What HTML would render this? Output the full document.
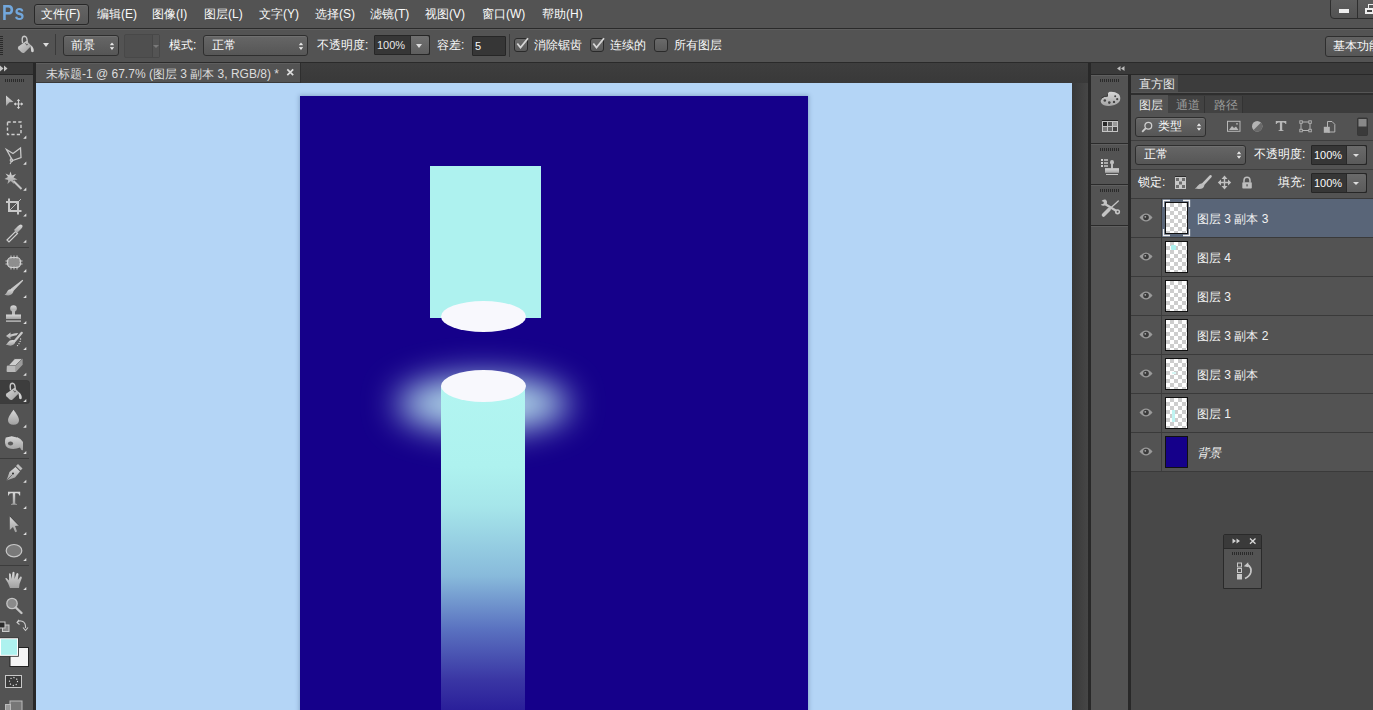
<!DOCTYPE html>
<html><head><meta charset="utf-8">
<style>
*{box-sizing:border-box;margin:0;padding:0}
html,body{width:1373px;height:710px;overflow:hidden;background:#535353;font-family:"Liberation Sans",sans-serif;font-size:12px;color:#fafafa}
.a{position:absolute}
.t{position:absolute;white-space:nowrap;line-height:14px}
.dd{position:absolute;border:1px solid #2e2e2e;border-radius:3px;background:linear-gradient(#666,#565656);box-shadow:inset 0 1px 0 #707070}
.inp{position:absolute;border:1px solid #262626;background:#363636;border-radius:1px}
.btn{position:absolute;background:linear-gradient(#6a6a6a,#5a5a5a);border-left:1px solid #2a2a2a}
.cb{position:absolute;width:14px;height:14px;border:1.5px solid #2a2a2a;border-radius:3px;background:linear-gradient(#6a6a6a,#5a5a5a)}
.updown{position:absolute;width:7px;height:10px}
</style></head><body>

<!-- MENU BAR -->
<div class="a" style="left:0;top:0;width:1373px;height:28px;background:#535353"></div>
<div class="a" style="left:0;top:28px;width:1373px;height:1px;background:#2a2a2a"></div><div class="a" style="left:0;top:29px;width:1373px;height:1px;background:#5e5e5e"></div>
<div class="t" style="left:2px;top:2px;font-size:22px;line-height:22px;font-weight:bold;color:#72a7dc;letter-spacing:1.0px;transform:scaleX(0.8);transform-origin:0 0">Ps</div>
<div class="a" style="left:34px;top:4px;width:55px;height:21px;border:1px solid #282828;border-radius:3px;background:linear-gradient(#646464,#585858);box-shadow:inset 0 1px 0 #6c6c6c,0 1px 0 #5e5e5e"></div>
<div class="t" style="left:41px;top:7px">文件(F)</div>
<div class="t" style="left:97px;top:7px">编辑(E)</div>
<div class="t" style="left:152px;top:7px">图像(I)</div>
<div class="t" style="left:204px;top:7px">图层(L)</div>
<div class="t" style="left:259px;top:7px">文字(Y)</div>
<div class="t" style="left:315px;top:7px">选择(S)</div>
<div class="t" style="left:370px;top:7px">滤镜(T)</div>
<div class="t" style="left:425px;top:7px">视图(V)</div>
<div class="t" style="left:482px;top:7px">窗口(W)</div>
<div class="t" style="left:542px;top:7px">帮助(H)</div>
<!-- window buttons -->
<div class="a" style="left:1330px;top:-3px;width:60px;height:22px;border:1px solid #2e2e2e;border-radius:4px;background:linear-gradient(#5e5e5e,#535353)"></div>
<div class="a" style="left:1357px;top:0;width:1px;height:18px;background:#2e2e2e"></div>
<div class="a" style="left:1339px;top:9px;width:10px;height:4px;background:#eee"></div>
<div class="a" style="left:1368px;top:4px;width:6px;height:5px;border:1.5px solid #eee"></div><div class="a" style="left:1365px;top:8px;width:9px;height:6px;border:2px solid #eee;background:#444"></div>

<!-- OPTIONS BAR -->
<!-- grip -->
<div class="a" style="left:0;top:36px;width:3px;height:19px;background:repeating-linear-gradient(#2a2a2a 0 1px,transparent 1px 2px)"></div>
<!-- bucket icon -->
<svg class="a" style="left:16px;top:34px" width="20" height="20" viewBox="16 34 20 20">
<defs><linearGradient id="bk" x1="0" y1="0" x2="1" y2="1"><stop offset="0" stop-color="#dadada"/><stop offset="1" stop-color="#9a9a9a"/></linearGradient></defs>
<path d="M22.6 43.2 Q21.2 36.3 24.4 36.2 Q27.2 36.2 27.3 42.3" fill="none" stroke="#c8c8c8" stroke-width="1.4"/>
<path d="M26.5 40.8 L31.4 45.7 L24.6 52.4 Q23 53.6 21.4 52.3 L18.4 49.3 Q17.2 47.8 18.5 46.4 Z" fill="url(#bk)"/>
<path d="M25.5 43.2 L26.8 45.2 L27.8 43.8" fill="none" stroke="#555" stroke-width="0.9"/>
<path d="M30.6 45 Q33 46.5 33.6 49 Q34.3 52.2 32.4 52.2 Q30.6 52.2 31 49.6 L30.6 47.2Z" fill="#d2d2d2"/>
</svg>
<div class="a" style="left:43px;top:43px;width:0;height:0;border-left:3.5px solid transparent;border-right:3.5px solid transparent;border-top:4px solid #ddd"></div>
<div class="a" style="left:55px;top:34px;width:1px;height:21px;background:#3a3a3a"></div>
<!-- 前景 dropdown -->
<div class="dd" style="left:63px;top:35px;width:56px;height:21px"></div>
<div class="t" style="left:71px;top:38px">前景</div>
<svg class="a" style="left:108.5px;top:40.5px" width="6" height="10"><path d="M0.2 4.6 L3 1 L5.8 4.6Z M0.2 5.8 L3 9.4 L5.8 5.8Z" fill="#e8e8e8" stroke="#2a2a2a" stroke-width="0.4"/></svg>
<!-- swatch dropdown -->
<div class="a" style="left:124px;top:34px;width:36px;height:24px;border:1px solid #484848;border-radius:2px;background:#4f4f4f"></div>
<div class="a" style="left:152px;top:35px;width:7px;height:22px;border-left:1px solid #474747;background:#545454"></div>
<div class="a" style="left:153px;top:45px;width:0;height:0;border-left:3px solid transparent;border-right:3px solid transparent;border-top:3px solid #7a7a7a"></div>
<div class="t" style="left:169px;top:38px">模式:</div>
<!-- 正常 dropdown -->
<div class="dd" style="left:203px;top:35px;width:105px;height:21px"></div>
<div class="t" style="left:212px;top:38px">正常</div>
<svg class="a" style="left:297.5px;top:40.5px" width="6" height="10"><path d="M0.2 4.6 L3 1 L5.8 4.6Z M0.2 5.8 L3 9.4 L5.8 5.8Z" fill="#e8e8e8" stroke="#2a2a2a" stroke-width="0.4"/></svg>
<div class="t" style="left:317px;top:38px">不透明度:</div>
<div class="inp" style="left:374px;top:35px;width:56px;height:20px"></div>
<div class="btn" style="left:410px;top:36px;width:19px;height:18px;border-radius:0 2px 2px 0;background:linear-gradient(#707070,#5e5e5e)"></div>
<div class="a" style="left:416px;top:44px;width:0;height:0;border-left:3.5px solid transparent;border-right:3.5px solid transparent;border-top:4px solid #ddd"></div>
<div class="t" style="left:377px;top:38px;font-size:11px;color:#e8e8e8">100%</div>
<div class="t" style="left:437px;top:38px">容差:</div>
<div class="inp" style="left:472px;top:36px;width:34px;height:20px"></div>
<div class="t" style="left:475px;top:39px;font-size:11px">5</div>
<div class="a" style="left:509px;top:34px;width:1px;height:23px;background:#3a3a3a"></div>
<div class="cb" style="left:514px;top:38px"></div>
<svg class="a" style="left:515px;top:36px" width="15" height="15"><path d="M2.3 7.5 L5.5 11.5 L13 2.3" fill="none" stroke="#d6d6d6" stroke-width="1.8"/></svg>
<div class="t" style="left:534px;top:38px">消除锯齿</div>
<div class="cb" style="left:590px;top:38px"></div>
<svg class="a" style="left:591px;top:36px" width="15" height="15"><path d="M2.3 7.5 L5.5 11.5 L13 2.3" fill="none" stroke="#d6d6d6" stroke-width="1.8"/></svg>
<div class="t" style="left:610px;top:38px">连续的</div>
<div class="cb" style="left:654px;top:38px"></div>
<div class="t" style="left:674px;top:38px">所有图层</div>
<!-- 基本功能 -->
<div class="a" style="left:1325px;top:36px;width:60px;height:21px;border:1px solid #2e2e2e;border-radius:3px;background:linear-gradient(#626262,#565656)"></div>
<div class="t" style="left:1333px;top:39px">基本功能</div>
<div class="a" style="left:0;top:62px;width:1373px;height:1px;background:#2a2a2a"></div>

<!-- TAB BAR + CANVAS -->
<div class="a" style="left:36px;top:63px;width:1052px;height:20px;background:linear-gradient(#3e3e3e,#393939)"></div>
<div class="a" style="left:36px;top:63px;width:264px;height:19px;background:#535353;border-top:1px solid #5e5e5e"></div><div class="a" style="left:300px;top:63px;width:1px;height:20px;background:#2e2e2e"></div>
<div class="t" style="left:46px;top:67px;color:#dcdcdc">未标题-1 @ 67.7% (图层 3 副本 3, RGB/8) *</div>
<svg class="a" style="left:284px;top:66px" width="12" height="12" viewBox="284 66 12 12"><path d="M287.3 69.3 L293.2 75.2 M293.2 69.3 L287.3 75.2" stroke="#dcdcdc" stroke-width="1.7"/></svg>
<div class="a" style="left:36px;top:83px;width:1036px;height:627px;background:#b4d5f6;overflow:hidden">
<div class="a" style="left:264px;top:13px;width:508px;height:700px;background:#15008a;box-shadow:0 0 4px 1px rgba(60,90,130,0.35);overflow:hidden">
 <div class="a" style="left:129.6px;top:70px;width:111px;height:152px;background:#aef2ef;filter:blur(0.45px)"></div>
 <div class="a" style="left:141px;top:205px;width:85px;height:31px;border-radius:50%;background:#f8f8fd"></div>
 <div class="a" style="left:97px;top:281px;width:172px;height:54px;border-radius:50%;background:#b4dcec;filter:blur(17px)"></div>
 <div class="a" style="left:141px;top:290px;width:84px;height:420px;background:linear-gradient(#b2f5f1 0px,#aef2ef 80px,#a6e6ea 120px,#88badb 190px,#5a72c0 243px,#3a36a4 294px,#2a1f9a 324px,#15008a 400px)"></div>
 <div class="a" style="left:141px;top:274px;width:85px;height:32px;border-radius:50%;background:#f8f8fd"></div>
</div>
</div>
<div class="a" style="left:1072px;top:83px;width:16px;height:627px;background:linear-gradient(90deg,#383838,#464646)"></div>

<!-- LEFT TOOLBAR -->
<div class="a" style="left:0;top:63px;width:36px;height:647px;background:#282828"></div>
<div class="a" style="left:0;top:63px;width:33px;height:11px;background:#3a3a3a"></div>
<div class="a" style="left:0;top:75px;width:33px;height:635px;background:#535353"></div>
<svg class="a" style="left:0;top:0" width="36" height="710" viewBox="0 0 36 710">
<defs>
<linearGradient id="tg" x1="0" y1="0" x2="0" y2="1"><stop offset="0" stop-color="#dadada"/><stop offset="1" stop-color="#a0a0a0"/></linearGradient>
<linearGradient id="bk2" x1="0" y1="0" x2="1" y2="1"><stop offset="0" stop-color="#dadada"/><stop offset="1" stop-color="#9a9a9a"/></linearGradient>
<linearGradient id="tgh" x1="0" y1="0" x2="1" y2="0"><stop offset="0" stop-color="#a8a8a8"/><stop offset="0.5" stop-color="#d4d4d4"/><stop offset="1" stop-color="#9a9a9a"/></linearGradient>
</defs>
<!-- header arrows -->
<path d="M0 65.5 L3.5 68.5 L0 71.5Z M4 65.5 L7.5 68.5 L4 71.5Z" fill="#c4c4c4"/>
<!-- grip -->
<path d="M5.5 79v3M7.5 79v3M9.5 79v3M11.5 79v3M13.5 79v3M15.5 79v3M17.5 79v3M19.5 79v3M21.5 79v3M23.5 79v3" stroke="#2a2a2a" stroke-width="1"/>
<!-- separators -->
<rect x="0" y="247" width="29" height="1" fill="#3c3c3c"/>
<rect x="0" y="458" width="29" height="1" fill="#3c3c3c"/>
<rect x="0" y="565" width="29" height="1" fill="#3c3c3c"/>
<!-- selected bucket bg -->
<rect x="-3" y="380.5" width="32.5" height="23" rx="2.5" fill="#3d3d3d" stroke="#333" stroke-width="0.5"/>
<!-- corner triangles -->
<g fill="#dedede">
<path d="M26.3 135.6 V138.7 H23.2Z"/><path d="M26.3 161.6 V164.7 H23.2Z"/><path d="M26.3 187.6 V190.7 H23.2Z"/><path d="M26.3 213.4 V216.5 H23.2Z"/><path d="M26.3 239.7 V242.8 H23.2Z"/>
<path d="M26.3 269.1 V272.2 H23.2Z"/><path d="M26.3 294.9 V298 H23.2Z"/><path d="M26.3 320.9 V324 H23.2Z"/><path d="M26.3 346.9 V350 H23.2Z"/><path d="M26.3 372.7 V375.8 H23.2Z"/><path d="M26.3 398.9 V402 H23.2Z"/>
<path d="M26.3 424.6 V427.7 H23.2Z"/><path d="M26.3 450.9 V454 H23.2Z"/><path d="M26.3 479.7 V482.8 H23.2Z"/><path d="M26.3 505.9 V509 H23.2Z"/><path d="M26.3 531.9 V535 H23.2Z"/><path d="M26.3 557.9 V561 H23.2Z"/><path d="M26.3 586.9 V590 H23.2Z"/>
</g>
<!-- 1 move -->
<path d="M6 95.5 L13.5 102 L9.5 102.3 L6 106Z" fill="url(#tg)"/>
<path d="M18.5 99.5 V108.5 M14 104 H23" stroke="#d0d0d0" stroke-width="1.2"/>
<path d="M16.8 101 L18.5 99 L20.2 101Z M16.8 107 L18.5 109 L20.2 107Z M16 102.3 L14 104 L16 105.7Z M21 102.3 L23 104 L21 105.7Z" fill="#d0d0d0"/>
<!-- 2 marquee -->
<rect x="7.5" y="122" width="13.5" height="12.5" fill="none" stroke="#cfcfcf" stroke-width="1.4" stroke-dasharray="3.2 2.2"/>
<!-- 3 lasso -->
<path d="M6.5 149.5 L13 153.5 L20.5 148 L21 157.5 L12.5 160.5 Z" fill="none" stroke="#c8c8c8" stroke-width="1.3"/>
<path d="M12 158 Q9 160 11 161.5 Q13 162 12.5 160 L10 164" fill="none" stroke="#c8c8c8" stroke-width="1.1"/>
<!-- 4 wand -->
<path d="M10.5 171.5 L11.8 175.5 L16 174 L13.5 177.6 L17.5 179.5 L13.3 180 L14 184 L10.8 181 L7.5 184 L8.2 180 L4.5 179 L8 177 L5.5 173.5 L9.3 175.3Z" fill="url(#tg)"/>
<path d="M13.5 181 L21.5 189" stroke="#c4c4c4" stroke-width="2"/>
<!-- 5 crop -->
<path d="M9 198.5 V211 H21.5 M6 202 H18 V214.5" fill="none" stroke="#c8c8c8" stroke-width="2"/>
<path d="M10 210 L21 199" stroke="#c8c8c8" stroke-width="0.9"/>
<!-- 6 eyedropper -->
<path d="M7 240 L15.5 231.5 L17.5 233.5 L9 242Z" fill="none" stroke="#cfcfcf" stroke-width="1.2"/>
<path d="M14 230 L18 226 Q20.5 223.5 22 225 Q23.5 226.5 21 229 L17 233Z" fill="url(#tg)"/>
<!-- 7 spot healing -->
<rect x="7.5" y="257.5" width="13" height="10" rx="4" fill="#8e8e8e" stroke="#cfcfcf" stroke-width="1.2"/>
<path d="M11 255.5v3M14 255.5v3M17 255.5v3M11 266.5v3M14 266.5v3M17 266.5v3M5.5 261h3M5.5 264h3M19.5 261h3M19.5 264h3" stroke="#d0d0d0" stroke-width="1"/>
<!-- 8 brush -->
<path d="M22.5 280.5 L13 290.5 L11.5 289 Z" fill="#c8c8c8" stroke="#c8c8c8" stroke-width="1.2" stroke-linejoin="round"/>
<path d="M12 289 Q8 289 7 292 Q6 294 4.5 294.5 Q9 296.5 12 294 Q14 292 13.3 290.3Z" fill="url(#tg)"/>
<!-- 9 stamp -->
<circle cx="13.5" cy="308.5" r="3.3" fill="url(#tg)"/>
<rect x="12" y="310" width="3" height="5" fill="#bbb"/>
<rect x="6" y="314.5" width="15" height="4.5" fill="url(#tg)"/>
<rect x="6" y="320.5" width="15" height="1.2" fill="#cfcfcf"/>
<!-- 10 history brush -->
<path d="M6 336 L10.6 332.6 L10.4 334.6 Q14 333.3 18.2 333 L16.6 335.3 Q13 335.8 10.4 337.1 L10.6 339.2Z" fill="url(#tg)"/>
<path d="M21.8 332.8 L14.8 341" stroke="#c8c8c8" stroke-width="2.2" stroke-linecap="round"/>
<path d="M14.5 340.3 Q10 339.3 8 342.3 Q7 344 5.8 344.6 Q11 346.8 13.6 344.6 Q15.6 343 15.2 341Z" fill="url(#tg)"/>
<g fill="#e0e0e0"><circle cx="20.6" cy="339" r="0.65"/><circle cx="20.1" cy="341.4" r="0.65"/><circle cx="19" cy="343.7" r="0.65"/><circle cx="17.5" cy="345.6" r="0.65"/></g>
<!-- 11 eraser -->
<path d="M8.3 365.5 L14.8 358.6 L22.6 358.6 L15.8 365.5Z" fill="#cdcdcd" stroke="#2e2e2e" stroke-width="0.6"/>
<path d="M6.8 366.5 Q6.8 365.5 8 365.5 H15.8 V372 H7.5 Q6.5 372 6.6 371Z" fill="#b8b8b8"/>
<path d="M15.8 365.5 L22.6 358.6 V364.8 L15.8 372Z" fill="#9c9c9c"/>
<!-- 12 bucket -->
<g transform="translate(-12 347)"><path d="M22.6 43.2 Q21.2 36.3 24.4 36.2 Q27.2 36.2 27.3 42.3" fill="none" stroke="#c8c8c8" stroke-width="1.4"/>
<path d="M26.5 40.8 L31.4 45.7 L24.6 52.4 Q23 53.6 21.4 52.3 L18.4 49.3 Q17.2 47.8 18.5 46.4 Z" fill="url(#bk2)"/>
<path d="M25.5 43.2 L26.8 45.2 L27.8 43.8" fill="none" stroke="#555" stroke-width="0.9"/>
<path d="M30.6 45 Q33 46.5 33.6 49 Q34.3 52.2 32.4 52.2 Q30.6 52.2 31 49.6 L30.6 47.2Z" fill="#d2d2d2"/></g>
<!-- 13 drop -->
<path d="M13.5 409.8 Q19 417 19 420 Q19 424.8 13.5 424.8 Q8 424.8 8 420 Q8 417 13.5 409.8Z" fill="url(#tg)"/>
<!-- 14 dodge -->
<path d="M6 437 Q10 435 15 436 Q20 438 23 442 L23 450 Q21.5 451 20 447.5 Q14 450 8 448 Q5 446 5 443 Q5 439 6 437Z" fill="url(#tg)"/>
<path d="M6 437 Q12 434.5 17 437" fill="none" stroke="#2e2e2e" stroke-width="0.8"/>
<ellipse cx="10.5" cy="443.5" rx="2.6" ry="2" fill="#5a5a5a"/>
<!-- 15 pen -->
<path d="M6.5 480.5 L9.5 472 L15.5 467 L20 471.5 L15 477.5Z" fill="url(#tg)"/>
<path d="M16 466 L18 464 L22.5 468.5 L20.5 470.5Z" fill="#bdbdbd"/>
<circle cx="13" cy="473.5" r="1" fill="#2e2e2e"/>
<path d="M6.5 480.5 L12.5 474.5" stroke="#555" stroke-width="0.7"/>
<!-- 16 type -->
<path d="M8 491.8 H20.2 V495.5 L19.3 495.5 Q19 493.3 17 493.3 H15.2 V503.3 Q15.3 504 17 504 V504.8 H11 V504 Q12.7 504 12.8 503.3 V493.3 H11 Q9 493.3 8.8 495.5 L8 495.5Z" fill="url(#tg)"/>
<!-- 17 path select -->
<path d="M9.8 516 L19 525.5 L15 526 L17 531.5 L15.2 532.3 L13 527 L9.8 530Z" fill="url(#tg)"/>
<path d="M9.8 516 L19 525.5" stroke="#2e2e2e" stroke-width="0.8"/>
<!-- 18 ellipse -->
<ellipse cx="14" cy="550.7" rx="7.8" ry="6.2" fill="#7a7a7a" stroke="#c8c8c8" stroke-width="1.2"/>
<!-- 19 hand -->
<path d="M10 588 L8 583 L5.5 579 Q5 577.5 6.5 578 L9 580.5 L9 574 Q9.5 572.5 10.8 574 L11.5 579 L12.5 572.5 Q13.5 571 14.5 572.5 L14.5 579 L16.5 573.5 Q17.5 572.5 18.5 574 L17.8 580 L20.5 576.5 Q22 576 21.8 578 L19.5 584 L19 588Z" fill="url(#tg)"/>
<!-- 20 zoom -->
<circle cx="12" cy="603.5" r="5.2" fill="#8a8a8a" stroke="#c4c4c4" stroke-width="1.3"/>
<path d="M15.8 607.5 L21.5 613" stroke="#c4c4c4" stroke-width="2.4" stroke-linecap="round"/>
<!-- mini default colors -->
<rect x="2.5" y="625" width="6.5" height="6.5" fill="#888" stroke="#ccc" stroke-width="1"/>
<rect x="-1" y="622" width="6" height="6" fill="#2a2a2a" stroke="#ccc" stroke-width="1"/>
<!-- switch -->
<path d="M17.5 623 Q17.5 620.5 21 621 Q25 621.5 25.5 626 V628" fill="none" stroke="#ccc" stroke-width="1.1"/>
<path d="M19 619.8 L17 622.5 L19.5 624.5" fill="none" stroke="#ccc" stroke-width="1.1"/>
<path d="M23 627.5 L25.5 630.5 L28 627.5" fill="none" stroke="#ccc" stroke-width="1.1"/>
<!-- fg/bg -->
<rect x="10" y="647.5" width="18.5" height="19" fill="#f4f4f4" stroke="#222" stroke-width="1"/>
<rect x="-1" y="637.8" width="19.5" height="18.5" fill="#fff" stroke="#222" stroke-width="0.8"/>
<rect x="1" y="639.2" width="16" height="15.6" fill="#aef2ef"/>
<!-- quick mask -->
<rect x="5.5" y="675.5" width="16" height="12" fill="#3a3a3a" stroke="#c8c8c8" stroke-width="1"/>
<circle cx="13.5" cy="681.5" r="4" fill="none" stroke="#e0e0e0" stroke-width="1.3" stroke-linecap="round" stroke-dasharray="0.1 3.04"/>
<!-- screen mode -->
<rect x="10" y="701" width="12" height="12" fill="#777" stroke="#bbb" stroke-width="1"/>
<rect x="5.5" y="704.5" width="5" height="8" fill="#999" stroke="#bbb" stroke-width="1"/>
</svg>

<!-- RIGHT DOCK -->
<div class="a" style="left:1088px;top:63px;width:285px;height:647px;background:#282828"></div>
<div class="a" style="left:1091px;top:63px;width:282px;height:11px;background:#3a3a3a"></div>
<div class="a" style="left:1091px;top:75px;width:37px;height:635px;background:#535353"></div>
<!-- icon column group borders -->
<div class="a" style="left:1091px;top:143px;width:37px;height:1px;background:#2a2a2a"></div>
<div class="a" style="left:1091px;top:184px;width:37px;height:1px;background:#2a2a2a"></div>
<div class="a" style="left:1091px;top:225px;width:37px;height:1px;background:#2a2a2a"></div>
<div class="a" style="left:1091px;top:75px;width:37px;height:1px;background:#5f5f5f"></div>
<div class="a" style="left:1091px;top:144px;width:37px;height:1px;background:#5f5f5f"></div>
<div class="a" style="left:1091px;top:185px;width:37px;height:1px;background:#5f5f5f"></div>
<div class="a" style="left:1091px;top:226px;width:37px;height:1px;background:#5f5f5f"></div>
<svg class="a" style="left:1088px;top:60px" width="42" height="170" viewBox="1088 60 42 170">
<defs>
<linearGradient id="ig" x1="0" y1="0" x2="0" y2="1"><stop offset="0" stop-color="#d8d8d8"/><stop offset="1" stop-color="#a4a4a4"/></linearGradient>
</defs>
<path d="M1120.5 66 L1117 68.5 L1120.5 71Z M1124.5 66 L1121 68.5 L1124.5 71Z" fill="#bdbdbd"/>
<g stroke="#2a2a2a" stroke-width="1">
<path d="M1100.5 79v3M1102.5 79v3M1104.5 79v3M1106.5 79v3M1108.5 79v3M1110.5 79v3M1112.5 79v3M1114.5 79v3M1116.5 79v3M1118.5 79v3"/>
<path d="M1100.5 148v3M1102.5 148v3M1104.5 148v3M1106.5 148v3M1108.5 148v3M1110.5 148v3M1112.5 148v3M1114.5 148v3M1116.5 148v3M1118.5 148v3"/>
<path d="M1100.5 189v3M1102.5 189v3M1104.5 189v3M1106.5 189v3M1108.5 189v3M1110.5 189v3M1112.5 189v3M1114.5 189v3M1116.5 189v3M1118.5 189v3"/>
</g>
<!-- palette -->
<path d="M1108 92 Q1114 90.8 1118.5 94 Q1121 96.5 1120 100.5 Q1118.5 104.5 1111 105.8 Q1103.5 106.5 1101.2 103 Q1100 100.5 1102.2 98.2 Q1104 96.5 1107.5 96.3 Q1107 93 1108 92Z" fill="url(#ig)"/>
<path d="M1101.5 98 Q1104 96 1107.5 96.3 Q1107 93 1108.5 91.8" fill="none" stroke="#2e2e2e" stroke-width="0.8"/>
<g fill="#444"><circle cx="1104.8" cy="100.5" r="1.3"/><circle cx="1109.3" cy="102.6" r="1.3"/><circle cx="1114" cy="101.9" r="1.2"/><circle cx="1117.2" cy="99.2" r="1.1"/><circle cx="1115.2" cy="96.2" r="1"/></g>
<!-- grid -->
<rect x="1102" y="120" width="16" height="1" fill="#2a2a2a"/>
<rect x="1102" y="121" width="16" height="11" fill="#c4c4c4"/>
<rect x="1103" y="122" width="4" height="4" fill="#2a2a2a"/><rect x="1108" y="122" width="4" height="4" fill="#555"/><rect x="1113" y="122" width="4" height="4" fill="#999"/>
<rect x="1103" y="127" width="4" height="4" fill="#7a7a7a"/><rect x="1108" y="127" width="4" height="4" fill="#666"/><rect x="1113" y="127" width="4" height="4" fill="#454545"/>
<!-- list+stamp -->
<g fill="#d0d0d0"><rect x="1101" y="159" width="2" height="2"/><rect x="1104" y="159.3" width="4" height="1.4"/><rect x="1101" y="162" width="2" height="2"/><rect x="1104" y="162.3" width="4" height="1.4"/><rect x="1101" y="165" width="2" height="2"/><rect x="1104" y="165.3" width="4" height="1.4"/></g>
<ellipse cx="1112" cy="162.3" rx="2" ry="2.3" fill="#c0c0c0"/>
<rect x="1111" y="163.5" width="2" height="5" fill="#bcbcbc"/>
<rect x="1105" y="168.2" width="14" height="4.6" fill="url(#ig)"/>
<rect x="1106" y="174" width="12" height="1" fill="#c4c4c4"/>
<!-- tools -->
<path d="M1105 204 L1116.5 211" stroke="#c4c4c4" stroke-width="2.2"/>
<path d="M1101.5 201 Q1103 199 1105.5 199.5 Q1107.5 200.5 1107 203.5 Q1106 206 1103 205.8 Q1101 205.5 1100.8 204.5 L1103.5 203.8 L1103.8 202 Z" fill="#c4c4c4"/>
<circle cx="1117.5" cy="211.8" r="2.6" fill="#c4c4c4"/><circle cx="1117.6" cy="211.8" r="1" fill="#535353"/>
<path d="M1118.3 201 L1108.5 210" stroke="#c4c4c4" stroke-width="1.3" stroke-linecap="round"/>
<path d="M1109 209.5 L1103.5 215" stroke="#c4c4c4" stroke-width="3.6" stroke-linecap="round"/>
</svg>

<!-- RIGHT PANEL -->
<div class="a" style="left:1131px;top:75px;width:242px;height:635px;background:#484848"></div>
<!-- panel1 tabs -->
<div class="a" style="left:1131px;top:75px;width:242px;height:18px;background:#3c3c3c"></div>
<div class="a" style="left:1131px;top:75px;width:47px;height:18px;background:#4e4e4e"></div>
<div class="t" style="left:1139px;top:77px;color:#e4e4e4">直方图</div>
<div class="a" style="left:1131px;top:92px;width:242px;height:1px;background:#555"></div>
<div class="a" style="left:1131px;top:93px;width:242px;height:2px;background:#2e2e2e"></div>
<!-- panel2 tabs -->
<div class="a" style="left:1131px;top:95px;width:242px;height:18px;background:#3c3c3c"></div>
<div class="a" style="left:1131px;top:95px;width:37px;height:18px;background:#535353"></div>
<div class="a" style="left:1168px;top:96px;width:37px;height:17px;background:#424242;border-right:1px solid #333"></div>
<div class="a" style="left:1205px;top:96px;width:38px;height:17px;background:#424242;border-right:1px solid #333"></div>
<div class="t" style="left:1139px;top:98px;color:#e8e8e8">图层</div>
<div class="t" style="left:1176px;top:98px;color:#9a9a9a">通道</div>
<div class="t" style="left:1214px;top:98px;color:#9a9a9a">路径</div>
<!-- panel2 body top rows -->
<div class="a" style="left:1131px;top:113px;width:242px;height:86px;background:#535353"></div>
<div class="a" style="left:1131px;top:140px;width:242px;height:1px;background:#3e3e3e"></div>
<div class="a" style="left:1131px;top:169px;width:242px;height:1px;background:#3e3e3e"></div>
<!-- filter dropdown -->
<div class="dd" style="left:1135px;top:117px;width:71px;height:20px"></div>
<svg class="a" style="left:1141px;top:121px" width="12" height="12"><circle cx="7.3" cy="4.7" r="3.4" fill="none" stroke="#cfcfcf" stroke-width="1.3"/><path d="M4.8 7.2 L1.2 10.8" stroke="#cfcfcf" stroke-width="1.8"/></svg>
<div class="t" style="left:1158px;top:119px">类型</div>
<svg class="a" style="left:1196px;top:122px" width="6" height="10"><path d="M0.2 4.4 L3 0.8 L5.8 4.4Z M0.2 5.6 L3 9.2 L5.8 5.6Z" fill="#e8e8e8" stroke="#2a2a2a" stroke-width="0.4"/></svg>
<!-- filter icons -->
<svg class="a" style="left:1220px;top:115px" width="155" height="24" viewBox="1220 115 155 24">
<rect x="1227.5" y="121.3" width="12.5" height="10" fill="none" stroke="#b8b8b8" stroke-width="1"/>
<path d="M1229 130 L1232 126 L1234 128 L1236 126.5 L1238.5 130Z" fill="#b8b8b8"/><circle cx="1237" cy="123.8" r="0.9" fill="#b8b8b8"/>
<circle cx="1257.2" cy="126.3" r="5.2" fill="#b4b4b4"/><path d="M1253.5 130 L1261 122.6 A5.2 5.2 0 0 1 1253.5 130Z" fill="#6a6a6a"/>
<path d="M1275.8 121 H1286.3 V124 H1285.5 Q1285.2 122.5 1283.5 122.5 H1282.2 V129.8 Q1282.3 130.3 1283.5 130.3 V131 H1278.6 V130.3 Q1279.8 130.3 1279.9 129.8 V122.5 H1278.6 Q1276.9 122.5 1276.6 124 H1275.8Z" fill="#b8b8b8"/>
<rect x="1301" y="122" width="9" height="8.5" fill="none" stroke="#b4b4b4" stroke-width="1"/>
<g fill="#535353" stroke="#b4b4b4" stroke-width="0.9"><rect x="1299.8" y="120.8" width="2.5" height="2.5"/><rect x="1308.8" y="120.8" width="2.5" height="2.5"/><rect x="1299.8" y="129.3" width="2.5" height="2.5"/><rect x="1308.8" y="129.3" width="2.5" height="2.5"/></g>
<path d="M1327.5 121.5 H1332 L1334.8 124.3 V132 H1328 V127 H1327.5Z" fill="none" stroke="#b4b4b4" stroke-width="1"/>
<rect x="1323.8" y="126.8" width="6" height="6" fill="#b4b4b4"/>
<rect x="1357.5" y="118" width="10" height="17.5" rx="1" fill="#3a3a3a" stroke="#333" stroke-width="0.8"/>
<rect x="1358.5" y="119" width="8" height="7.5" fill="#888"/>
</svg>
<!-- blend row -->
<div class="dd" style="left:1135px;top:145px;width:111px;height:20px"></div>
<div class="t" style="left:1144px;top:147px">正常</div>
<svg class="a" style="left:1236px;top:150px" width="6" height="10"><path d="M0.2 4.4 L3 0.8 L5.8 4.4Z M0.2 5.6 L3 9.2 L5.8 5.6Z" fill="#e8e8e8" stroke="#2a2a2a" stroke-width="0.4"/></svg>
<div class="t" style="left:1254px;top:147px">不透明度:</div>
<div class="inp" style="left:1311px;top:145px;width:56px;height:20px"></div>
<div class="btn" style="left:1346px;top:146px;width:20px;height:18px;border-radius:0 2px 2px 0"></div>
<div class="a" style="left:1352.5px;top:154px;width:0;height:0;border-left:3.5px solid transparent;border-right:3.5px solid transparent;border-top:3.5px solid #ddd"></div>
<div class="t" style="left:1314px;top:148px;font-size:11px">100%</div>
<!-- lock row -->
<div class="t" style="left:1138px;top:175px">锁定:</div>
<svg class="a" style="left:1170px;top:172px" width="90" height="20" viewBox="1170 172 90 20">
<rect x="1175" y="177" width="11" height="12" fill="#c8c8c8"/><g fill="#6e6e6e"><rect x="1176" y="178" width="3" height="3"/><rect x="1182" y="178" width="3" height="3"/><rect x="1179" y="181.5" width="3" height="3"/><rect x="1176" y="185" width="3" height="3"/><rect x="1182" y="185" width="3" height="3"/></g><rect x="1175" y="176" width="11" height="1" fill="#2e2e2e"/>
<path d="M1210.5 176.3 L1203.3 184" stroke="#c4c4c4" stroke-width="2.6" stroke-linecap="round"/>
<path d="M1203 183 Q1199 183.3 1197.5 186 Q1196.5 187.8 1194.8 188.6 Q1200.5 189.8 1203 188 Q1205 186.5 1204.2 184.2Z" fill="#bdbdbd"/>
<path d="M1224.5 177 V188 M1219 182.5 H1230" stroke="#c0c0c0" stroke-width="1.4"/>
<path d="M1221.5 179 L1224.5 175.5 L1227.5 179Z M1221.5 186 L1224.5 189.5 L1227.5 186Z M1221 179.5 L1217.8 182.5 L1221 185.5Z M1228 179.5 L1231.2 182.5 L1228 185.5Z" fill="#c0c0c0"/>
<path d="M1244 182.5 V180.5 Q1244 177.3 1247 177.3 Q1250 177.3 1250 180.5 V182.5" fill="none" stroke="#bdbdbd" stroke-width="1.5"/>
<rect x="1242.3" y="182.3" width="9.5" height="6.3" rx="0.8" fill="#bdbdbd"/>
<rect x="1246.4" y="184.2" width="1.3" height="2.2" fill="#555"/>
</svg>
<div class="t" style="left:1278px;top:175px">填充:</div>
<div class="inp" style="left:1311px;top:173px;width:56px;height:20px"></div>
<div class="btn" style="left:1346px;top:174px;width:20px;height:18px;border-radius:0 2px 2px 0"></div>
<div class="a" style="left:1352.5px;top:182px;width:0;height:0;border-left:3.5px solid transparent;border-right:3.5px solid transparent;border-top:3.5px solid #ddd"></div>
<div class="t" style="left:1314px;top:176px;font-size:11px">100%</div>
<div class="a" style="left:1131px;top:198px;width:242px;height:1px;background:#383838"></div>

<!-- LAYER ROWS -->
<div class="a" style="left:1131px;top:198px;width:242px;height:39px;background:#535353;border-top:1px solid #3a3a3a"></div>
<div class="a" style="left:1162px;top:199px;width:211px;height:38px;background:#596578"></div>
<div class="a" style="left:1161px;top:199px;width:1px;height:38px;background:#3d3d3d"></div>
<svg class="a" style="left:1138px;top:211px" width="16" height="13" viewBox="0 0 16 13"><path d="M1.5 6.5 Q8 -1.5 14.5 6.5 Q8 14.5 1.5 6.5Z" fill="#9a9a9a"/><circle cx="8" cy="6.5" r="2.8" fill="#3a3a3a"/><circle cx="7.3" cy="5.8" r="0.9" fill="#aaa"/></svg>
<div class="a" style="left:1165px;top:202px;width:23px;height:32px;border:1px solid #111;background-color:#fff;background-image:linear-gradient(45deg,#cdcdcd 25%,transparent 25%,transparent 75%,#cdcdcd 75%),linear-gradient(45deg,#cdcdcd 25%,transparent 25%,transparent 75%,#cdcdcd 75%);background-size:8px 8px;background-position:0 0,4px 4px"></div>
<svg class="a" style="left:1162px;top:199px" width="30" height="38" viewBox="0 0 30 38"><path d="M1.5 8 V1.5 H8 M21 1.5 H27.5 V8 M27.5 30 V36.5 H21 M8 36.5 H1.5 V30" fill="none" stroke="#f0f0f0" stroke-width="1.3"/></svg>
<div class="t" style="left:1197px;top:212px;color:#f2f2f2;">图层 3 副本 3</div>
<div class="a" style="left:1131px;top:237px;width:242px;height:39px;background:#535353;border-top:1px solid #3a3a3a"></div>
<div class="a" style="left:1161px;top:238px;width:1px;height:38px;background:#3d3d3d"></div>
<svg class="a" style="left:1138px;top:250px" width="16" height="13" viewBox="0 0 16 13"><path d="M1.5 6.5 Q8 -1.5 14.5 6.5 Q8 14.5 1.5 6.5Z" fill="#9a9a9a"/><circle cx="8" cy="6.5" r="2.8" fill="#3a3a3a"/><circle cx="7.3" cy="5.8" r="0.9" fill="#aaa"/></svg>
<div class="a" style="left:1165px;top:241px;width:23px;height:32px;border:1px solid #111;background-color:#fff;background-image:linear-gradient(45deg,#cdcdcd 25%,transparent 25%,transparent 75%,#cdcdcd 75%),linear-gradient(45deg,#cdcdcd 25%,transparent 25%,transparent 75%,#cdcdcd 75%);background-size:8px 8px;background-position:0 0,4px 4px"></div>
<div class="a" style="left:1171px;top:245px;width:5px;height:5px;background:#aef2ef;border-radius:1px"></div>
<div class="t" style="left:1197px;top:251px;color:#f2f2f2;">图层 4</div>
<div class="a" style="left:1131px;top:276px;width:242px;height:39px;background:#535353;border-top:1px solid #3a3a3a"></div>
<div class="a" style="left:1161px;top:277px;width:1px;height:38px;background:#3d3d3d"></div>
<svg class="a" style="left:1138px;top:289px" width="16" height="13" viewBox="0 0 16 13"><path d="M1.5 6.5 Q8 -1.5 14.5 6.5 Q8 14.5 1.5 6.5Z" fill="#9a9a9a"/><circle cx="8" cy="6.5" r="2.8" fill="#3a3a3a"/><circle cx="7.3" cy="5.8" r="0.9" fill="#aaa"/></svg>
<div class="a" style="left:1165px;top:280px;width:23px;height:32px;border:1px solid #111;background-color:#fff;background-image:linear-gradient(45deg,#cdcdcd 25%,transparent 25%,transparent 75%,#cdcdcd 75%),linear-gradient(45deg,#cdcdcd 25%,transparent 25%,transparent 75%,#cdcdcd 75%);background-size:8px 8px;background-position:0 0,4px 4px"></div>
<div class="t" style="left:1197px;top:290px;color:#f2f2f2;">图层 3</div>
<div class="a" style="left:1131px;top:315px;width:242px;height:39px;background:#535353;border-top:1px solid #3a3a3a"></div>
<div class="a" style="left:1161px;top:316px;width:1px;height:38px;background:#3d3d3d"></div>
<svg class="a" style="left:1138px;top:328px" width="16" height="13" viewBox="0 0 16 13"><path d="M1.5 6.5 Q8 -1.5 14.5 6.5 Q8 14.5 1.5 6.5Z" fill="#9a9a9a"/><circle cx="8" cy="6.5" r="2.8" fill="#3a3a3a"/><circle cx="7.3" cy="5.8" r="0.9" fill="#aaa"/></svg>
<div class="a" style="left:1165px;top:319px;width:23px;height:32px;border:1px solid #111;background-color:#fff;background-image:linear-gradient(45deg,#cdcdcd 25%,transparent 25%,transparent 75%,#cdcdcd 75%),linear-gradient(45deg,#cdcdcd 25%,transparent 25%,transparent 75%,#cdcdcd 75%);background-size:8px 8px;background-position:0 0,4px 4px"></div>
<div class="t" style="left:1197px;top:329px;color:#f2f2f2;">图层 3 副本 2</div>
<div class="a" style="left:1131px;top:354px;width:242px;height:39px;background:#535353;border-top:1px solid #3a3a3a"></div>
<div class="a" style="left:1161px;top:355px;width:1px;height:38px;background:#3d3d3d"></div>
<svg class="a" style="left:1138px;top:367px" width="16" height="13" viewBox="0 0 16 13"><path d="M1.5 6.5 Q8 -1.5 14.5 6.5 Q8 14.5 1.5 6.5Z" fill="#9a9a9a"/><circle cx="8" cy="6.5" r="2.8" fill="#3a3a3a"/><circle cx="7.3" cy="5.8" r="0.9" fill="#aaa"/></svg>
<div class="a" style="left:1165px;top:358px;width:23px;height:32px;border:1px solid #111;background-color:#fff;background-image:linear-gradient(45deg,#cdcdcd 25%,transparent 25%,transparent 75%,#cdcdcd 75%),linear-gradient(45deg,#cdcdcd 25%,transparent 25%,transparent 75%,#cdcdcd 75%);background-size:8px 8px;background-position:0 0,4px 4px"></div>
<div class="a" style="left:1172px;top:372px;width:4px;height:2px;background:#d8f8f6"></div>
<div class="t" style="left:1197px;top:368px;color:#f2f2f2;">图层 3 副本</div>
<div class="a" style="left:1131px;top:393px;width:242px;height:39px;background:#535353;border-top:1px solid #3a3a3a"></div>
<div class="a" style="left:1161px;top:394px;width:1px;height:38px;background:#3d3d3d"></div>
<svg class="a" style="left:1138px;top:406px" width="16" height="13" viewBox="0 0 16 13"><path d="M1.5 6.5 Q8 -1.5 14.5 6.5 Q8 14.5 1.5 6.5Z" fill="#9a9a9a"/><circle cx="8" cy="6.5" r="2.8" fill="#3a3a3a"/><circle cx="7.3" cy="5.8" r="0.9" fill="#aaa"/></svg>
<div class="a" style="left:1165px;top:397px;width:23px;height:32px;border:1px solid #111;background-color:#fff;background-image:linear-gradient(45deg,#cdcdcd 25%,transparent 25%,transparent 75%,#cdcdcd 75%),linear-gradient(45deg,#cdcdcd 25%,transparent 25%,transparent 75%,#cdcdcd 75%);background-size:8px 8px;background-position:0 0,4px 4px"></div>
<div class="a" style="left:1172px;top:410px;width:3px;height:12px;background:#bff4f2"></div>
<div class="t" style="left:1197px;top:407px;color:#f2f2f2;">图层 1</div>
<div class="a" style="left:1131px;top:432px;width:242px;height:39px;background:#535353;border-top:1px solid #3a3a3a"></div>
<div class="a" style="left:1161px;top:433px;width:1px;height:38px;background:#3d3d3d"></div>
<svg class="a" style="left:1138px;top:445px" width="16" height="13" viewBox="0 0 16 13"><path d="M1.5 6.5 Q8 -1.5 14.5 6.5 Q8 14.5 1.5 6.5Z" fill="#9a9a9a"/><circle cx="8" cy="6.5" r="2.8" fill="#3a3a3a"/><circle cx="7.3" cy="5.8" r="0.9" fill="#aaa"/></svg>
<div class="a" style="left:1165px;top:436px;width:23px;height:32px;border:1px solid #111;background:#15008a"></div>
<div class="t" style="left:1197px;top:446px;color:#f2f2f2;font-style:italic;">背景</div>
<div class="a" style="left:1131px;top:471px;width:242px;height:1px;background:#3a3a3a"></div>

<!-- floating mini panel -->
<div class="a" style="left:1223px;top:534px;width:39px;height:55px;border:1px solid #2a2a2a;border-radius:2px 2px 0 0;background:#535353"></div>
<div class="a" style="left:1224px;top:535px;width:37px;height:13px;background:#3a3a3a"></div>
<div class="a" style="left:1224px;top:548px;width:37px;height:1px;background:#2a2a2a"></div>
<svg class="a" style="left:1223px;top:534px" width="40" height="56" viewBox="1223 534 40 56">
<path d="M1232.5 538.5 L1236 541 L1232.5 543.5Z M1236.5 538.5 L1240 541 L1236.5 543.5Z" fill="#d0d0d0"/>
<path d="M1250 538.5 L1255.5 543.8 M1255.5 538.5 L1250 543.8" stroke="#d8d8d8" stroke-width="1.3"/>
<path d="M1232.5 552v3M1234.5 552v3M1236.5 552v3M1238.5 552v3M1240.5 552v3M1242.5 552v3M1244.5 552v3M1246.5 552v3M1248.5 552v3M1250.5 552v3M1252.5 552v3" stroke="#2a2a2a" stroke-width="1"/>
<rect x="1237.5" y="563" width="4" height="4" fill="none" stroke="#c8c8c8" stroke-width="1"/>
<rect x="1237.5" y="568.5" width="4" height="4" fill="none" stroke="#c8c8c8" stroke-width="1"/>
<rect x="1237" y="574" width="5" height="5.5" fill="#c8c8c8"/>
<path d="M1243.8 566.2 L1248.2 562.3 L1248.6 567.3Z" fill="#c8c8c8"/>
<path d="M1247.3 564.5 Q1252 567.5 1250.8 572.5 Q1249.5 576.5 1245 578.5" fill="none" stroke="#c8c8c8" stroke-width="1.7"/>
</svg>

</body></html>
